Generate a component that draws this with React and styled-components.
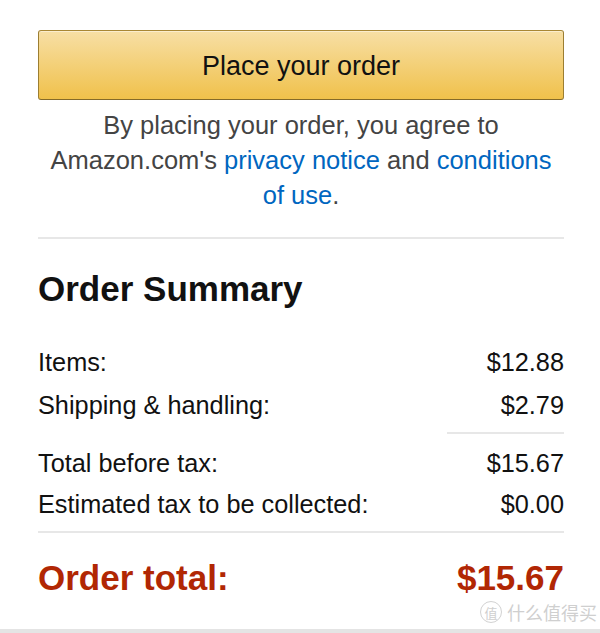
import React from "react";
import styled, { createGlobalStyle } from "styled-components";

const GlobalStyle = createGlobalStyle`
  html, body { margin: 0; padding: 0; background: #fff; }
  body { font-family: "Liberation Sans", Arial, sans-serif; color: #111; }
  * { box-sizing: border-box; }
`;

const Page = styled.div`
  position: relative;
  width: 600px;
  height: 633px;
  padding: 30px 36px 0 38px;
  border-bottom: 4px solid #e4e4e4;
  background: #fff;
  overflow: hidden;
`;

const OrderButton = styled.button`
  display: flex;
  align-items: center;
  justify-content: center;
  width: 100%;
  height: 70px;
  padding: 2px 0 0;
  border: 1px solid;
  border-color: #a88734 #9c7e31 #846a29;
  border-radius: 3px;
  background: linear-gradient(to bottom, #f7dfa5, #f0c14b);
  box-shadow: inset 0 1px 0 rgba(255, 255, 255, 0.45);
  font-family: "Liberation Sans", Arial, sans-serif;
  font-size: 27px;
  color: #111;
  cursor: pointer;
`;

const Legal = styled.p`
  margin: 8px 0 0;
  padding: 0 8px;
  text-align: center;
  font-size: 25.5px;
  line-height: 35px;
  color: #444;
`;

const Link = styled.a`
  color: #0066c0;
  text-decoration: none;
`;

const Divider = styled.hr`
  margin: ${(p) => p.$mt}px 0 0 ${(p) => p.$ml || 0}px;
  border: 0;
  border-top: 2px solid #e7e7e7;
  height: 0;
`;

const Title = styled.h2`
  margin: 30px 0 0;
  font-size: 35px;
  line-height: 40px;
  font-weight: bold;
  color: #111;
`;

const Rows = styled.div`
  display: flex;
  flex-direction: column;
  margin-top: ${(p) => p.$mt}px;
`;

const Row = styled.div`
  display: flex;
  justify-content: space-between;
  align-items: center;
  height: ${(p) => p.$h}px;
  font-size: 25.3px;
  color: #111;
`;

const TotalRow = styled.div`
  display: flex;
  justify-content: space-between;
  align-items: center;
  height: 40px;
  margin-top: 25px;
  font-size: 35px;
  font-weight: bold;
  color: #b12704;
`;

const Watermark = styled.div`
  position: absolute;
  right: 3px;
  bottom: 6px;
  display: flex;
  align-items: center;
  gap: 5px;
  color: #cfcfcf;
  font-family: "Noto Sans CJK SC", sans-serif;
  font-size: 18px;
  line-height: 22px;
`;

const Badge = styled.span`
  display: inline-flex;
  align-items: center;
  justify-content: center;
  width: 22px;
  height: 22px;
  border: 1.5px solid #d2d2d2;
  border-radius: 50%;
  font-size: 13px;
  line-height: 1;
`;

export default function App() {
  return (
    <>
      <GlobalStyle />
      <Page>
        <OrderButton>Place your order</OrderButton>
        <Legal>
          By placing your order, you agree to Amazon.com's{" "}
          <Link href="#">privacy notice</Link> and{" "}
          <Link href="#">conditions of use</Link>.
        </Legal>
        <Divider $mt={24} />
        <Title>Order Summary</Title>
        <Rows $mt={32}>
          <Row $h={43}>
            <span>Items:</span>
            <span>$12.88</span>
          </Row>
          <Row $h={43}>
            <span>Shipping &amp; handling:</span>
            <span>$2.79</span>
          </Row>
        </Rows>
        <Divider $mt={5} $ml={409} />
        <Rows $mt={8}>
          <Row $h={42}>
            <span>Total before tax:</span>
            <span>$15.67</span>
          </Row>
          <Row $h={41}>
            <span>Estimated tax to be collected:</span>
            <span>$0.00</span>
          </Row>
        </Rows>
        <Divider $mt={6} />
        <TotalRow>
          <span>Order total:</span>
          <span>$15.67</span>
        </TotalRow>
        <Watermark>
          <Badge>值</Badge>
          <span>什么值得买</span>
        </Watermark>
      </Page>
    </>
  );
}
